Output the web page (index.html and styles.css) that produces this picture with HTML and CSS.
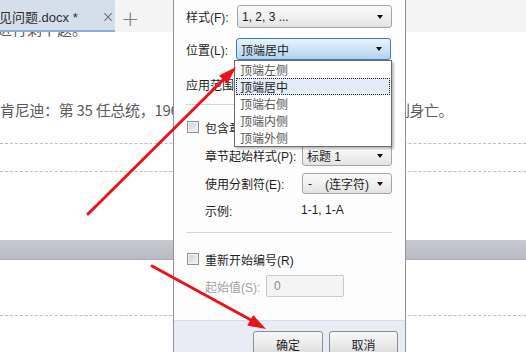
FILE: index.html
```html
<!DOCTYPE html>
<html lang="zh">
<head>
<meta charset="utf-8">
<title>编号设置</title>
<link rel="stylesheet" href="styles.css">
</head>
<body>
<div class="screen">
  <div class="topbar">
    <div class="tab">
      <span class="tab-title">见问题.docx *</span>
      <span class="tab-close">×</span>
    </div>
    <span class="tab-add">+</span>
  </div>
  <div class="doc">
    <p class="line first">进行剩下题。</p>
    <p class="line kennedy"><span class="k-left">肯尼迪：第 35 任总统，196</span><span class="k-right">刺身亡。</span></p>
    <div class="dash d1"></div>
    <div class="dash d2"></div>
    <div class="band"></div>
    <div class="dash d3"></div>
  </div>

  <div class="dialog">
    <div class="dlg-body">
      <div class="row r1">
        <span class="lbl w51">样式(F):</span>
        <div class="select s-wide"><span>1, 2, 3 ...</span><i class="caret"></i></div>
      </div>
      <div class="row r2">
        <span class="lbl w50">位置(L):</span>
        <div class="select s-wide focus"><span>顶端居中</span><i class="caret"></i></div>
      </div>
      <div class="row r3">
        <span class="lbl clip48">应用范围(A):</span>
      </div>
      <div class="sep s1"></div>
      <div class="row r4">
        <span class="check"></span><span class="lbl clip29">包含章节编号(C)</span>
      </div>
      <div class="row r5 indent">
        <span class="lbl w97">章节起始样式(P):</span>
        <div class="select s-small"><span>标题 1</span><i class="caret"></i></div>
      </div>
      <div class="row r6 indent">
        <span class="lbl w97">使用分割符(E):</span>
        <div class="select s-small"><span class="sepchar">-</span><span>(连字符)</span><i class="caret"></i></div>
      </div>
      <div class="row r7 indent">
        <span class="lbl w96">示例:</span>
        <span class="val">1-1, 1-A</span>
      </div>
      <div class="sep s2"></div>
      <div class="row r8">
        <span class="check"></span><span class="lbl">重新开始编号(R)</span>
      </div>
      <div class="row r9 indent">
        <span class="lbl disabled w61">起始值(S):</span>
        <div class="input">0</div>
      </div>
    </div>
    <div class="dlg-foot">
      <button class="btn ok">确定</button>
      <button class="btn cancel">取消</button>
    </div>

    <ul class="dropdown">
      <li>顶端左侧</li>
      <li class="hl">顶端居中</li>
      <li>顶端右侧</li>
      <li>顶端内侧</li>
      <li>顶端外侧</li>
    </ul>
  </div>

  <svg class="arrows" width="526" height="352" viewBox="0 0 526 352">
    <line x1="88" y1="214" x2="224" y2="79" stroke="#e8141a" stroke-width="3" stroke-linecap="round"/>
    <polygon points="236,67 227.4,84 219,75.5" fill="#e8141a"/>
    <line x1="152" y1="266" x2="251" y2="320" stroke="#e8141a" stroke-width="3" stroke-linecap="round"/>
    <polygon points="266,329 247.3,325.5 253.2,315" fill="#e8141a"/>
  </svg>
</div>
</body>
</html>
```

FILE: styles.css
```css
* { box-sizing: border-box; }
html, body { margin: 0; padding: 0; }
body {
  width: 526px;
  height: 352px;
  overflow: hidden;
  background: #fff;
  font-family: "Liberation Sans", "Noto Sans CJK SC", sans-serif;
}
.screen {
  position: relative;
  width: 526px;
  height: 352px;
  overflow: hidden;
  background: #fff;
}

/* top tab bar */
.topbar {
  position: relative;
  z-index: 1;
  height: 32px;
  background: #f4f4f4;
  display: flex;
  align-items: stretch;
}
.tab {
  width: 115px;
  height: 32px;
  background: #d5dfec;
  border-bottom: 2px solid #8eaed6;
  display: flex;
  align-items: center;
  padding-top: 3px;
  overflow: hidden;
}
.tab-title {
  margin-left: -1px;
  font-size: 13px;
  color: #2e2e2e;
  white-space: nowrap;
}
.tab-close {
  margin-left: 24px;
  font-size: 15px;
  color: #555;
  font-family: "DejaVu Sans", sans-serif;
  font-weight: 300;
}
.tab-add {
  margin-left: 6px;
  margin-top: 3px;
  font-size: 22px;
  color: #7a7a7a;
  line-height: 32px;
  font-family: "DejaVu Sans", sans-serif;
  font-weight: 300;
}

/* document */
.doc {
  font-family: "Noto Sans CJK SC", sans-serif;
  color: #5b5b5b;
}
.line {
  margin: 0;
  font-size: 15px;
  line-height: 20px;
  white-space: nowrap;
}
.first {
  margin-top: -13px;
  margin-left: -3px;
}
.kennedy {
  margin-top: 61px;
  display: flex;
}
.k-left {
  width: 173px;
  overflow: hidden;
  letter-spacing: -0.3px;
}
.k-right {
  margin-left: 222px;
  letter-spacing: -0.5px;
}
.dash {
  height: 0;
  border-top: 1px dashed #bdbdbd;
}
.d1 { margin-top: 23px; }
.d2 { margin-top: 27px; }
.band {
  margin-top: 68px;
  height: 20px;
  background: linear-gradient(#c8cad1, #b9bcc4);
  border-bottom: 1px solid #a9acb4;
}
.d3 { margin-top: 55px; }

/* dialog */
.dialog {
  position: absolute;
  left: 173px;
  top: 0;
  width: 233px;
  height: 352px;
  background: #fdfdfd;
  border-left: 1px solid #8b93a2;
  border-right: 1px solid #8b93a2;
  display: flex;
  flex-direction: column;
  font-size: 12px;
  color: #1e1e1e;
  z-index: 2;
}
.dlg-body {
  flex: 1;
  padding: 5px 13px 0 12px;
}
.row {
  display: flex;
  align-items: center;
  white-space: nowrap;
}
.indent { padding-left: 19px; }
.lbl { flex: none; }
.clip48 { width: 48px; overflow: hidden; }
.clip29 { width: 29px; overflow: hidden; }
.w50 { width: 50px; }
.w51 { width: 51px; }
.w61 { width: 61px; }
.w96 { width: 96px; }
.w97 { width: 97px; }
.disabled { color: #a3a3a3; }
.r1 { height: 23px; }
.r2 { height: 22px; margin-top: 10px; }
.r3 { height: 20px; margin-top: 14px; overflow: hidden; }
.sep {
  height: 1px;
  background: #d6d6d6;
}
.s1 { margin-top: 10px; }
.r4 { height: 18px; margin-top: 13px; }
.r5 { height: 21px; margin-top: 9px; }
.r6 { height: 21px; margin-top: 7px; }
.r7 { height: 18px; margin-top: 7px; }
.s2 { margin-top: 13px; }
.r8 { height: 18px; margin-top: 17px; }
.r9 { height: 22px; margin-top: 7px; }

.select {
  height: 100%;
  border: 1px solid #a3a5ab;
  border-radius: 3px;
  background: linear-gradient(#fbfbfb, #f0f0f0 50%, #e3e3e3);
  display: flex;
  align-items: center;
  padding: 0 8px 0 4px;
}
.s-wide { width: 155px; }
.s-small { width: 90px; }
.select.focus {
  border-color: #3d7bb0;
  background: linear-gradient(#e9f3fc, #cfe3f6 50%, #b2d2ef);
}
.caret {
  margin-left: auto;
  width: 0;
  height: 0;
  border-left: 3.5px solid transparent;
  border-right: 3.5px solid transparent;
  border-top: 4px solid #111;
}
.sepchar { margin-right: 13px; margin-left: 1px; }

.check {
  width: 12px;
  height: 12px;
  margin-left: 1px;
  margin-right: 6px;
  border: 1px solid #8e8f8f;
  background: linear-gradient(135deg, #d2d2d2, #f4f4f4);
  box-shadow: inset 0 0 0 1px #f2f2f2;
  flex: none;
}
.val { color: #1e1e1e; }

.input {
  width: 78px;
  height: 100%;
  border: 1px solid #c9c9c9;
  border-radius: 2px;
  background: #f4f4f4;
  color: #8c8c8c;
  display: flex;
  align-items: center;
  padding-left: 7px;
}

.dlg-foot {
  height: 32px;
  background: #e9ecf5;
  border-top: 1px solid #dadee7;
  display: flex;
  align-items: flex-start;
  gap: 6px;
  padding: 10px 0 0 79px;
}
.btn {
  height: 24px;
  border: 1px solid #8c8d90;
  border-radius: 3px;
  background: linear-gradient(#f7f7f7, #ececec 50%, #dcdcdc);
  font-family: "Liberation Sans", "Noto Sans CJK SC", sans-serif;
  font-size: 12px;
  color: #1e1e1e;
  padding: 0;
  padding-top: 2px;
}
.ok { width: 70px; }
.cancel { width: 69px; }

.dropdown {
  position: absolute;
  left: 60px;
  top: 60px;
  width: 158px;
  height: 87px;
  margin: 0;
  padding: 0 1px;
  list-style: none;
  background: #fff;
  border: 1px solid #6b6b6b;
  box-shadow: 2px 2px 2px rgba(0, 0, 0, 0.25);
  font-size: 12px;
  color: #555;
}
.dropdown li {
  height: 17px;
  line-height: 15px;
  padding-left: 3px;
  border: 1px solid transparent;
  font-family: "Noto Sans CJK SC", sans-serif;
}
.dropdown li.hl {
  background: #e3ecf8;
  border: 1px dotted #222;
  color: #222;
}

.arrows {
  position: absolute;
  left: 0;
  top: 0;
  z-index: 3;
  pointer-events: none;
}
```
